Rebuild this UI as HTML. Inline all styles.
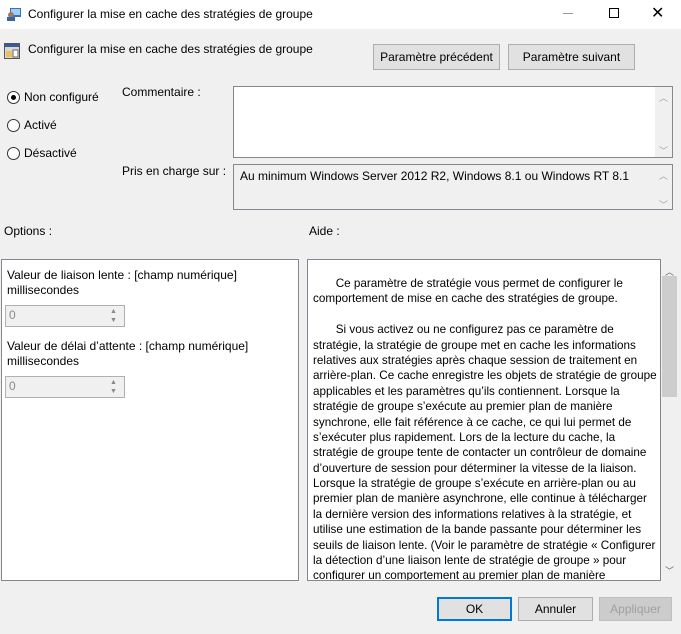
<!DOCTYPE html>
<html><head><meta charset="utf-8"><style>
*{margin:0;padding:0;box-sizing:border-box}
body{width:681px;height:634px;background:#f0f0f0;font-family:"Liberation Sans",sans-serif;font-size:12px;color:#000;position:relative;overflow:hidden}
.a{position:absolute;white-space:nowrap}
.btn{position:absolute;background:#e1e1e1;border:1px solid #adadad;text-align:center;font-size:12px}
.box{position:absolute;border:1px solid #828790;background:#fff}
.radio{position:absolute;width:13px;height:13px;border:1px solid #333;border-radius:50%;background:#fff}
.sb{position:absolute;background:#f0f0f0;color:#a0a0a0;font-size:9px;text-align:center}
.help div{white-space:nowrap;height:15.4px;line-height:15.4px;font-size:11.7px}
</style></head><body>
<div class="a" style="left:0;top:0;width:681px;height:29px;background:#fff"></div>
<svg class="a" style="left:6px;top:6px" width="16" height="16"><rect x="4" y="2" width="11" height="9" fill="#3a6fc0"/><rect x="5" y="3" width="9" height="6" fill="#9cd0f5"/><circle cx="5" cy="9" r="3" fill="#9a7a60"/><rect x="1" y="11" width="8" height="4" fill="#3465a4"/></svg>
<div class="a" style="left:28px;top:7px;font-size:12px">Configurer la mise en cache des stratégies de groupe</div>
<div class="a" style="left:563px;top:13px;width:10px;height:1px;background:#999"></div>
<div class="a" style="left:609px;top:8px;width:10px;height:10px;border:1px solid #000"></div>
<div class="a" style="left:651px;top:3px;font-size:16px">✕</div>
<svg class="a" style="left:4px;top:43px" width="16" height="16"><rect x="0.5" y="0.5" width="15" height="15" fill="#d8d8d8" stroke="#555"/><rect x="1" y="1" width="14" height="3" fill="#3a5a9a"/><rect x="2" y="8" width="6" height="6" fill="#e8c060"/><rect x="9" y="7" width="5" height="7" fill="#fff" stroke="#666"/></svg>
<div class="a" style="left:28px;top:42px">Configurer la mise en cache des stratégies de groupe</div>
<div class="btn" style="left:373px;top:44px;width:127px;height:26px;line-height:24px">Paramètre précédent</div>
<div class="btn" style="left:508px;top:44px;width:127px;height:26px;line-height:24px">Paramètre suivant</div>
<div class="radio" style="left:7px;top:91px"><div style="position:absolute;left:3px;top:3px;width:5px;height:5px;border-radius:50%;background:#000"></div></div>
<div class="a" style="left:24px;top:90px">Non configuré</div>
<div class="radio" style="left:7px;top:119px"></div>
<div class="a" style="left:24px;top:118px">Activé</div>
<div class="radio" style="left:7px;top:147px"></div>
<div class="a" style="left:24px;top:146px">Désactivé</div>
<div class="a" style="left:122px;top:85px">Commentaire :</div>
<div class="box" style="left:233px;top:86px;width:440px;height:72px"></div>
<div class="sb" style="left:655px;top:87px;width:17px;height:70px"><div style="margin-top:4px">︿</div><div style="margin-top:40px">﹀</div></div>
<div class="a" style="left:122px;top:164px">Pris en charge sur :</div>
<div class="box" style="left:233px;top:164px;width:440px;height:46px;background:#f0f0f0"></div>
<div class="a" style="left:240px;top:169px">Au minimum Windows Server 2012 R2, Windows 8.1 ou Windows RT 8.1</div>
<div class="sb" style="left:655px;top:165px;width:17px;height:44px"><div style="margin-top:4px">︿</div><div style="margin-top:16px">﹀</div></div>
<div class="a" style="left:4px;top:224px">Options :</div>
<div class="a" style="left:309px;top:224px">Aide :</div>
<div class="box" style="left:1px;top:259px;width:298px;height:322px"></div>
<div class="a" style="left:7px;top:268px">Valeur de liaison lente : [champ numérique]</div>
<div class="a" style="left:7px;top:283px">millisecondes</div>
<div class="a" style="left:5px;top:305px;width:120px;height:22px;border:1px solid #b0b0b0;background:#f0f0f0;color:#888;padding:2px 3px">0</div>
<div class="a" style="left:110px;top:307px;color:#888;font-size:7px;line-height:9px">▲<br>▼</div>
<div class="a" style="left:7px;top:339px">Valeur de délai d’attente : [champ numérique]</div>
<div class="a" style="left:7px;top:354px">millisecondes</div>
<div class="a" style="left:5px;top:376px;width:120px;height:22px;border:1px solid #b0b0b0;background:#f0f0f0;color:#888;padding:2px 3px">0</div>
<div class="a" style="left:110px;top:378px;color:#888;font-size:7px;line-height:9px">▲<br>▼</div>
<div class="box" style="left:307px;top:259px;width:354px;height:322px;overflow:hidden">
<div class="help" style="position:absolute;left:5px;top:16px">
<div>&nbsp;&nbsp;&nbsp;&nbsp;&nbsp;&nbsp;&nbsp;Ce paramètre de stratégie vous permet de configurer le</div>
<div>comportement de mise en cache des stratégies de groupe.</div>
<div></div>
<div>&nbsp;&nbsp;&nbsp;&nbsp;&nbsp;&nbsp;&nbsp;Si vous activez ou ne configurez pas ce paramètre de</div>
<div>stratégie, la stratégie de groupe met en cache les informations</div>
<div>relatives aux stratégies après chaque session de traitement en</div>
<div>arrière-plan. Ce cache enregistre les objets de stratégie de groupe</div>
<div>applicables et les paramètres qu’ils contiennent. Lorsque la</div>
<div>stratégie de groupe s’exécute au premier plan de manière</div>
<div>synchrone, elle fait référence à ce cache, ce qui lui permet de</div>
<div>s’exécuter plus rapidement. Lors de la lecture du cache, la</div>
<div>stratégie de groupe tente de contacter un contrôleur de domaine</div>
<div>d’ouverture de session pour déterminer la vitesse de la liaison.</div>
<div>Lorsque la stratégie de groupe s’exécute en arrière-plan ou au</div>
<div>premier plan de manière asynchrone, elle continue à télécharger</div>
<div>la dernière version des informations relatives à la stratégie, et</div>
<div>utilise une estimation de la bande passante pour déterminer les</div>
<div>seuils de liaison lente. (Voir le paramètre de stratégie « Configurer</div>
<div>la détection d’une liaison lente de stratégie de groupe » pour</div>
<div>configurer un comportement au premier plan de manière</div>
<div>synchrone.)</div>
</div></div>
<div class="sb" style="left:661px;top:259px;width:17px;height:322px;color:#666"><div style="margin-top:6px">︿</div><div style="position:absolute;left:1px;top:17px;width:15px;height:121px;background:#cdcdcd"></div><div style="position:absolute;top:305px;width:17px">﹀</div></div>
<div class="btn" style="left:437px;top:597px;width:75px;height:24px;line-height:21px;border:2px solid #0078d7">OK</div>
<div class="btn" style="left:518px;top:597px;width:75px;height:24px;line-height:22px">Annuler</div>
<div class="btn" style="left:599px;top:597px;width:73px;height:24px;line-height:22px;background:#cccccc;border-color:#bfbfbf;color:#a0a0a0">Appliquer</div>
</body></html>
